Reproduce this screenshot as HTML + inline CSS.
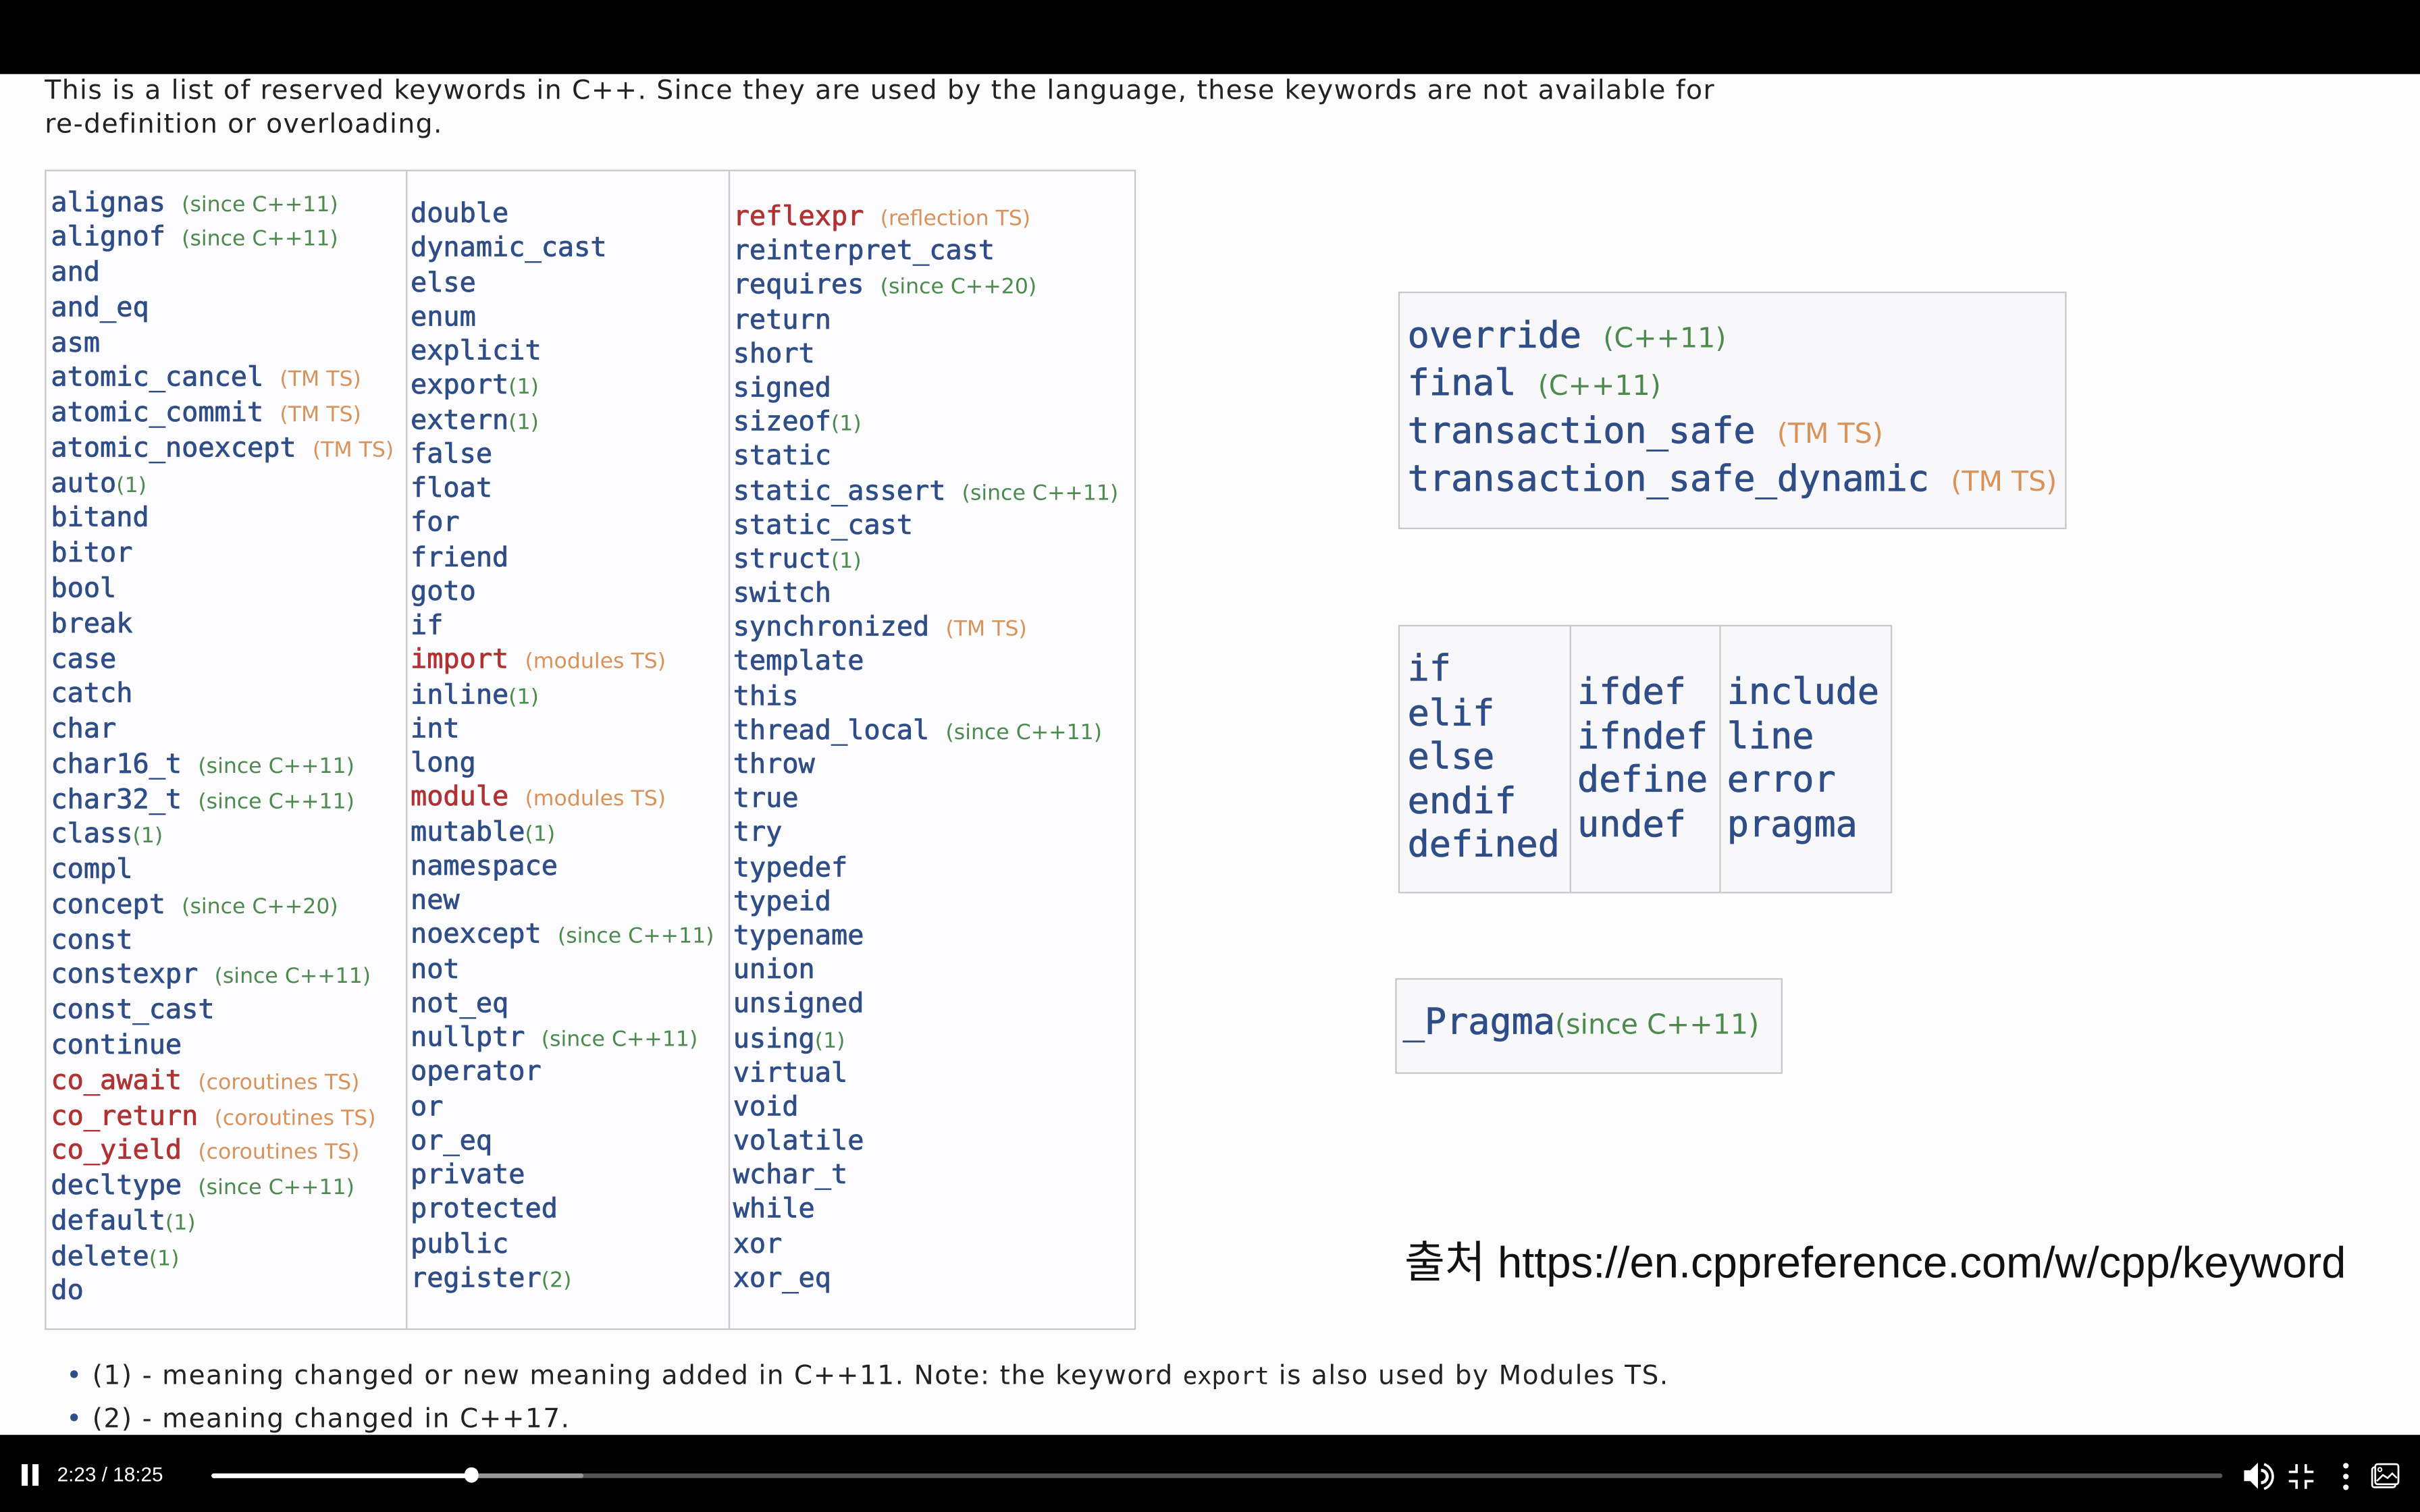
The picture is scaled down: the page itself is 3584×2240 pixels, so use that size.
<!DOCTYPE html>
<html><head><meta charset="utf-8"><style>
html,body{margin:0;padding:0;background:#000;overflow:hidden}
#w{position:absolute;left:0;top:0;width:1568px;height:980px;transform:scale(2.285714);transform-origin:0 0;background:#000}
#page{position:absolute;left:0;top:48px;width:1568px;height:882px;background:#fcfcfc}
.s{font-family:"DejaVu Sans","Liberation Sans",sans-serif;color:#222}
.m{font-family:"DejaVu Sans Mono","Liberation Mono",monospace;color:#2f4d87;-webkit-text-stroke:0.35px currentColor}
.col{position:absolute;font-size:17.6px;white-space:nowrap}
.col div{height:var(--lh);line-height:var(--lh)}
.g{font-family:"DejaVu Sans","Liberation Sans",sans-serif;font-size:13.8px;color:#4d8a4d;-webkit-text-stroke:0}
.o{font-family:"DejaVu Sans","Liberation Sans",sans-serif;font-size:13.8px;color:#d9935a;-webkit-text-stroke:0}
.r{color:#b03232}
.box{position:absolute;border:1px solid #c8c8c8;background:#f8f8fa}
</style></head><body><div id="w">
<div id="page"></div>
<div class="s" style="position:absolute;left:29px;top:48px;font-size:17.2px;letter-spacing:0.62px;line-height:22px;color:#222;white-space:nowrap">This is a list of reserved keywords in C++. Since they are used by the language, these keywords are not available for<br>re-definition or overloading.</div>

<div class="box" style="left:29px;top:110px;width:705px;height:750px;background:#fcfcfe"></div>
<div style="position:absolute;left:263px;top:110px;width:1px;height:751px;background:#c8c8c8"></div>
<div style="position:absolute;left:472px;top:110px;width:1px;height:751px;background:#c8c8c8"></div>

<div class="col m" style="left:33px;top:120.6px;--lh:22.77px">
<div>alignas <span class="g">(since C++11)</span></div><div>alignof <span class="g">(since C++11)</span></div><div>and</div><div>and_eq</div><div>asm</div><div>atomic_cancel <span class="o">(TM TS)</span></div><div>atomic_commit <span class="o">(TM TS)</span></div><div>atomic_noexcept <span class="o">(TM TS)</span></div><div>auto<span class="g">(1)</span></div><div>bitand</div><div>bitor</div><div>bool</div><div>break</div><div>case</div><div>catch</div><div>char</div><div>char16_t <span class="g">(since C++11)</span></div><div>char32_t <span class="g">(since C++11)</span></div><div>class<span class="g">(1)</span></div><div>compl</div><div>concept <span class="g">(since C++20)</span></div><div>const</div><div>constexpr <span class="g">(since C++11)</span></div><div>const_cast</div><div>continue</div><div><span class="r">co_await</span> <span class="o">(coroutines TS)</span></div><div><span class="r">co_return</span> <span class="o">(coroutines TS)</span></div><div><span class="r">co_yield</span> <span class="o">(coroutines TS)</span></div><div>decltype <span class="g">(since C++11)</span></div><div>default<span class="g">(1)</span></div><div>delete<span class="g">(1)</span></div><div>do</div>
</div>

<div class="col m" style="left:266px;top:128px;--lh:22.26px">
<div>double</div><div>dynamic_cast</div><div>else</div><div>enum</div><div>explicit</div><div>export<span class="g">(1)</span></div><div>extern<span class="g">(1)</span></div><div>false</div><div>float</div><div>for</div><div>friend</div><div>goto</div><div>if</div><div><span class="r">import</span> <span class="o">(modules TS)</span></div><div>inline<span class="g">(1)</span></div><div>int</div><div>long</div><div><span class="r">module</span> <span class="o">(modules TS)</span></div><div>mutable<span class="g">(1)</span></div><div>namespace</div><div>new</div><div>noexcept <span class="g">(since C++11)</span></div><div>not</div><div>not_eq</div><div>nullptr <span class="g">(since C++11)</span></div><div>operator</div><div>or</div><div>or_eq</div><div>private</div><div>protected</div><div>public</div><div>register<span class="g">(2)</span></div>
</div>

<div class="col m" style="left:475px;top:130px;--lh:22.2px">
<div><span class="r">reflexpr</span> <span class="o">(reflection TS)</span></div><div>reinterpret_cast</div><div>requires <span class="g">(since C++20)</span></div><div>return</div><div>short</div><div>signed</div><div>sizeof<span class="g">(1)</span></div><div>static</div><div>static_assert <span class="g">(since C++11)</span></div><div>static_cast</div><div>struct<span class="g">(1)</span></div><div>switch</div><div>synchronized <span class="o">(TM TS)</span></div><div>template</div><div>this</div><div>thread_local <span class="g">(since C++11)</span></div><div>throw</div><div>true</div><div>try</div><div>typedef</div><div>typeid</div><div>typename</div><div>union</div><div>unsigned</div><div>using<span class="g">(1)</span></div><div>virtual</div><div>void</div><div>volatile</div><div>wchar_t</div><div>while</div><div>xor</div><div>xor_eq</div>
</div>

<div class="box" style="left:906px;top:189px;width:431px;height:152px"></div>
<div class="col m" style="left:912px;top:202px;--lh:31px;font-size:23.4px">
<div>override <span class="g" style="font-size:18px">(C++11)</span></div><div>final <span class="g" style="font-size:18px">(C++11)</span></div><div>transaction_safe <span class="o" style="font-size:18px">(TM TS)</span></div><div>transaction_safe_dynamic <span class="o" style="font-size:18px">(TM TS)</span></div>
</div>

<div class="box" style="left:906px;top:405px;width:318px;height:172px"></div>
<div style="position:absolute;left:1017px;top:405px;width:1px;height:173px;background:#c8c8c8"></div>
<div style="position:absolute;left:1114px;top:405px;width:1px;height:173px;background:#c8c8c8"></div>
<div class="col m" style="left:912px;top:419px;--lh:28.5px;font-size:23.4px"><div>if</div><div>elif</div><div>else</div><div>endif</div><div>defined</div></div>
<div class="col m" style="left:1022px;top:434px;--lh:28.5px;font-size:23.4px"><div>ifdef</div><div>ifndef</div><div>define</div><div>undef</div></div>
<div class="col m" style="left:1119px;top:434px;--lh:28.5px;font-size:23.4px"><div>include</div><div>line</div><div>error</div><div>pragma</div></div>

<div class="box" style="left:904px;top:634px;width:249px;height:60px"></div>
<div class="col m" style="left:909px;top:648px;--lh:28px;font-size:23.4px"><div>_Pragma<span class="g" style="font-size:18px">(since C++11)</span></div></div>

<div style="position:absolute;left:910px;top:799px;font-size:28.5px;line-height:40px;color:#111;font-family:'Liberation Sans','Noto Sans CJK KR',sans-serif;letter-spacing:0px">출처 https://en.cppreference.com/w/cpp/keyword</div>

<div class="s" style="position:absolute;left:43px;top:878px;font-size:17px;letter-spacing:0.7px;line-height:28px;color:#222;white-space:nowrap">
<div><span style="color:#2f4d87">•</span> (1) - meaning changed or new meaning added in C++11. Note: the keyword <span style="font-family:'DejaVu Sans Mono',monospace;font-size:15.5px;letter-spacing:0">export</span> is also used by Modules TS.</div>
<div><span style="color:#2f4d87">•</span> (2) - meaning changed in C++17.</div>
</div>

<!-- controls -->
<div style="position:absolute;left:14px;top:949px;width:4px;height:14px;background:#fff"></div>
<div style="position:absolute;left:21px;top:949px;width:4px;height:14px;background:#fff"></div>
<div style="position:absolute;left:37px;top:947px;font-size:13px;color:#fff;font-family:'Liberation Sans',sans-serif;line-height:18px">2:23 / 18:25</div>
<div style="position:absolute;left:137px;top:955px;width:1303px;height:3px;background:#555;border-radius:2px"></div>
<div style="position:absolute;left:137px;top:955px;width:241px;height:3px;background:#999;border-radius:2px"></div>
<div style="position:absolute;left:137px;top:955px;width:168px;height:3px;background:#fff;border-radius:2px"></div>
<div style="position:absolute;left:301px;top:951px;width:9px;height:10px;background:#fff;border-radius:5px"></div>
<svg style="position:absolute;left:1450px;top:944px" width="110" height="26" viewBox="0 0 110 26">
<path d="M4 9h4l5-5v17l-5-5H4z" fill="#fff"/><path d="M15 9a4 4 0 0 1 0 8" stroke="#fff" stroke-width="2" fill="none"/><path d="M17 5a8.5 8.5 0 0 1 0 16" stroke="#fff" stroke-width="1.6" fill="none"/>
<path d="M38 5v5h-5M44 5v5h5M38 21v-5h-5M44 21v-5h5" stroke="#fff" stroke-width="1.6" fill="none"/>
<circle cx="70" cy="6" r="1.8" fill="#fff"/><circle cx="70" cy="13" r="1.8" fill="#fff"/><circle cx="70" cy="20" r="1.8" fill="#fff"/>
<rect x="87" y="7" width="15" height="13" rx="1.5" stroke="#fff" stroke-width="1.2" fill="none"/><rect x="89" y="5" width="15" height="13" rx="1.5" stroke="#fff" stroke-width="1.2" fill="#000"/><path d="M90 16l4-4 3 2 3-3 3 3" stroke="#fff" stroke-width="1.1" fill="none"/><circle cx="92" cy="8.5" r="1.2" stroke="#fff" stroke-width="0.9" fill="none"/>
</svg>
</div></body></html>
